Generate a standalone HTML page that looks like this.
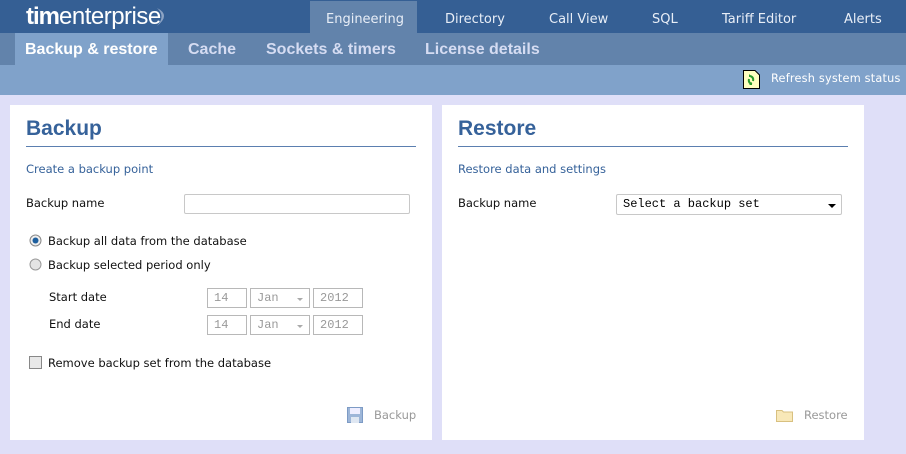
<!DOCTYPE html>
<html><head><style>
*{margin:0;padding:0;box-sizing:border-box}
body{width:906px;height:454px;background:#dfdff8;font-family:"DejaVu Sans",Verdana,sans-serif;font-size:11.5px;color:#111;position:relative;overflow:hidden}
.a{position:absolute;white-space:nowrap}
#top{left:0;top:0;width:906px;height:33px;background:#355f94}
#sub{left:0;top:33px;width:906px;height:32px;background:#6283ab}
#tool{left:0;top:65px;width:906px;height:30px;background:#80a2ca}
.nav{top:12px;color:#e8eef7;font-size:13px}
.st{top:41px;color:#d5dcf2;font:bold 16px "Liberation Sans",Arial,sans-serif}
.panel{top:105px;width:422px;height:335px;background:#fff}
.h{font:bold 21px "Liberation Sans",Arial,sans-serif;color:#36629a}
.hl{height:1px;background:#5b7fb0}
.blue{color:#36629a}
.inp{border:1px solid #c8c8c8;border-radius:2px;background:#fff}
.dt{border:1px solid #b8b8b8;font:12px "Liberation Mono",monospace;color:#999;padding:2px 6px;height:20px}
.ar{position:absolute;right:6px;top:9px;width:0;height:0;border-left:3px solid transparent;border-right:3px solid transparent;border-top:3px solid #aaa}
</style></head><body>
<div class="a" id="top"></div>
<div class="a" id="sub"></div>
<div class="a" id="tool"></div>
<div class="a" style="left:26px;top:3px;font:24px 'Liberation Sans',Arial,sans-serif;color:#fff;letter-spacing:-0.5px"><b style="letter-spacing:-1px">tim</b>enterprise</div>
<svg class="a" style="left:155px;top:6px" width="16" height="22"><path d="M2 2 Q16 9 2 20 Q11 10 2 2Z" fill="#8ea4c4"/></svg>
<div class="a" style="left:310px;top:1px;width:107px;height:32px;background:#6283ab"></div>
<div class="a nav" style="left:326px">Engineering</div>
<div class="a nav" style="left:445px">Directory</div>
<div class="a nav" style="left:549px">Call View</div>
<div class="a nav" style="left:652px">SQL</div>
<div class="a nav" style="left:722px">Tariff Editor</div>
<div class="a nav" style="left:844px">Alerts</div>
<div class="a" style="left:15px;top:33px;width:153px;height:32px;background:#80a2ca"></div>
<div class="a st" style="left:25px;color:#fff">Backup &amp; restore</div>
<div class="a st" style="left:188px">Cache</div>
<div class="a st" style="left:266px">Sockets &amp; timers</div>
<div class="a st" style="left:425px">License details</div>
<svg class="a" style="left:743px;top:70px" width="17" height="19"><path d="M0.5 0.5H12L16.5 5V18.5H0.5Z" fill="#ffffc0" stroke="#000"/><path d="M6 4 L9 7 L6 7Z M9 12 L6 15 L9 15Z" fill="#2a9a2a"/><path d="M7 6 Q11 7 10 11 M9 14 Q5 13 6 9" stroke="#2a9a2a" stroke-width="2" fill="none"/></svg>
<div class="a" style="left:771px;top:72px;color:#fff;font-size:11.3px;letter-spacing:0.2px">Refresh system status</div>

<div class="a panel" style="left:10px"></div>
<div class="a h" style="left:26px;top:117px">Backup</div>
<div class="a hl" style="left:26px;top:146px;width:390px"></div>
<div class="a blue" style="left:26px;top:162px">Create a backup point</div>
<div class="a" style="left:26px;top:196px">Backup name</div>
<div class="a inp" style="left:184px;top:194px;width:226px;height:20px"></div>
<svg class="a" style="left:29px;top:234px" width="13" height="13"><circle cx="6.5" cy="6.5" r="5.5" fill="#eee" stroke="#888"/><circle cx="6.5" cy="6.5" r="3" fill="#1d5f9e"/></svg>
<div class="a" style="left:48px;top:234px">Backup all data from the database</div>
<svg class="a" style="left:29px;top:258px" width="13" height="13"><circle cx="6.5" cy="6.5" r="5.5" fill="#e4e4e4" stroke="#999"/></svg>
<div class="a" style="left:48px;top:258px">Backup selected period only</div>
<div class="a" style="left:49px;top:290px">Start date</div>
<div class="a" style="left:49px;top:317px">End date</div>
<div class="a dt" style="left:207px;top:288px;width:40px">14</div>
<div class="a dt" style="left:250px;top:288px;width:60px">Jan<span class="ar"></span></div>
<div class="a dt" style="left:313px;top:288px;width:50px">2012</div>
<div class="a dt" style="left:207px;top:315px;width:40px">14</div>
<div class="a dt" style="left:250px;top:315px;width:60px">Jan<span class="ar"></span></div>
<div class="a dt" style="left:313px;top:315px;width:50px">2012</div>
<div class="a" style="left:29px;top:356px;width:13px;height:13px;border:1px solid #888;background:#e8e8e8"></div>
<div class="a" style="left:48px;top:356px">Remove backup set from the database</div>
<svg class="a" style="left:347px;top:407px" width="16" height="16"><rect x="0.5" y="0.5" width="15" height="15" fill="#9db6d8" stroke="#7d9bc5"/><rect x="3" y="1" width="10" height="6" fill="#eef"/><rect x="4" y="10" width="8" height="6" fill="#dfe7f2"/></svg>
<div class="a" style="left:374px;top:408px;color:#999">Backup</div>

<div class="a panel" style="left:442px"></div>
<div class="a h" style="left:458px;top:117px">Restore</div>
<div class="a hl" style="left:458px;top:146px;width:390px"></div>
<div class="a blue" style="left:458px;top:162px">Restore data and settings</div>
<div class="a" style="left:458px;top:196px">Backup name</div>
<div class="a inp" style="left:616px;top:194px;width:226px;height:21px;font:12px 'Liberation Mono',monospace;padding:2px 6px;color:#000">Select a backup set<span class="ar" style="border-top:4px solid #000;border-left-width:4px;border-right-width:4px;top:9px;right:5px"></span></div>
<svg class="a" style="left:776px;top:408px" width="17" height="14"><path d="M0.5 2.5H6L7.5 4H16.5V13.5H0.5Z" fill="#f8e8b8" stroke="#d8c080"/></svg>
<div class="a" style="left:804px;top:408px;color:#999">Restore</div>
</body></html>
